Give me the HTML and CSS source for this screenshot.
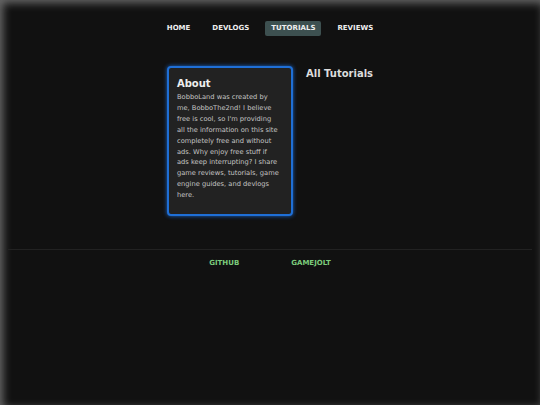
FILE: index.html
```html
<!DOCTYPE html>
<html lang="en">
<head>
<meta charset="utf-8">
<title>BobboLand - Tutorials</title>
<link rel="stylesheet" href="styles.css">
</head>
<body>
<nav class="nav">
  <a class="nav-item" href="#">HOME</a>
  <a class="nav-item" href="#">DEVLOGS</a>
  <a class="nav-item active" href="#">TUTORIALS</a>
  <a class="nav-item" href="#">REVIEWS</a>
</nav>
<div class="content">
  <aside class="about">
    <h2 class="about-title">About</h2>
    <p class="about-text">BobboLand was created by me, BobboThe2nd! I believe free is cool, so I'm providing all the information on this site completely free and without ads. Why enjoy free stuff if ads keep interrupting? I share game reviews, tutorials, game engine guides, and devlogs here.</p>
  </aside>
  <main class="main">
    <h1 class="main-title">All Tutorials</h1>
  </main>
</div>
<footer class="footer">
  <a class="footer-link" href="#">GITHUB</a>
  <a class="footer-link" href="#">GAMEJOLT</a>
</footer>
</body>
</html>
```
FILE: styles.css
```css
html {
  background: #111111;
  min-height: 100%;
  box-shadow: inset 3px 3px 8px #6a6a6a;
}
body {
  margin: 8px;
  font-family: "DejaVu Sans", Verdana, sans-serif;
  color: #dddddd;
}
.nav {
  display: flex;
  justify-content: center;
  gap: 10px;
  padding-top: 13px;
}
.nav-item {
  color: #eeeeee;
  text-decoration: none;
  font-weight: bold;
  font-size: 7px;
  line-height: 9px;
  padding: 3px 6px;
  border-radius: 2px;
}
.nav-item.active {
  background: #3d5050;
}
.content {
  display: flex;
  justify-content: center;
  align-items: flex-start;
  gap: 13px;
  margin-top: 30px;
}
.about {
  width: 102px;
  padding: 10px 12px 13px 8px;
  background: #222222;
  border: 2px solid #1f6fd6;
  border-radius: 4px;
  box-shadow: 0 0 4px #1a64c8;
}
.about-title {
  margin: 0 0 2px;
  font-size: 10px;
  line-height: 12px;
  color: #eeeeee;
}
.about-text {
  margin: 0;
  font-size: 6.7px;
  line-height: 10.9px;
  color: #c4c4c4;
}
.main-title {
  margin: 2px 0 0;
  font-size: 10px;
  line-height: 12px;
  color: #dddddd;
}
.footer {
  margin-top: 33px;
  border-top: 1px solid #222222;
  display: flex;
  justify-content: center;
  gap: 52px;
  padding-top: 9px;
}
.footer-link {
  color: #7ccc7c;
  text-decoration: none;
  font-weight: bold;
  font-size: 7px;
  line-height: 9px;
}
```
